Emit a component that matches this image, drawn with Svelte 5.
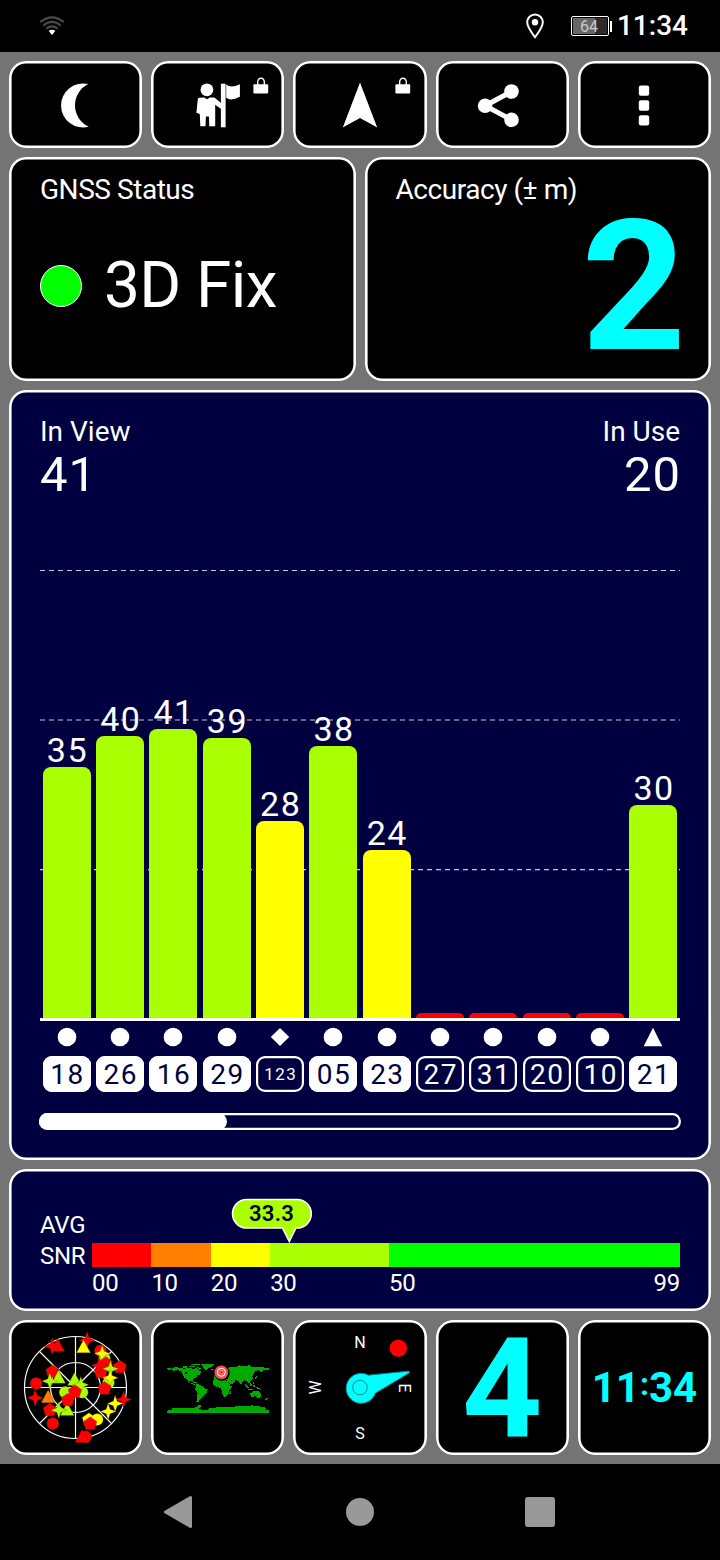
<script lang="ts">
  type Shape = 'circle' | 'diamond' | 'triangle';
  type Marker = 'circle' | 'tri' | 'pent' | 'star';

  const LIME = '#aaff00';
  const YELLOW = '#ffff00';
  const RED = '#ff0000';
  const ORANGE = '#ff8000';
  const GREEN = '#00ff00';

  const satellites: { id: string; snr?: number; height: number; color: string; shape: Shape; used: boolean }[] = [
    { id: '18', snr: 35, height: 251, color: LIME, shape: 'circle', used: true },
    { id: '26', snr: 40, height: 282, color: LIME, shape: 'circle', used: true },
    { id: '16', snr: 41, height: 289, color: LIME, shape: 'circle', used: true },
    { id: '29', snr: 39, height: 280, color: LIME, shape: 'circle', used: true },
    { id: '123', snr: 28, height: 197, color: YELLOW, shape: 'diamond', used: false },
    { id: '05', snr: 38, height: 272, color: LIME, shape: 'circle', used: true },
    { id: '23', snr: 24, height: 168, color: YELLOW, shape: 'circle', used: true },
    { id: '27', height: 5, color: RED, shape: 'circle', used: false },
    { id: '31', height: 5, color: RED, shape: 'circle', used: false },
    { id: '20', height: 5, color: RED, shape: 'circle', used: false },
    { id: '10', height: 5, color: RED, shape: 'circle', used: false },
    { id: '21', snr: 30, height: 213, color: LIME, shape: 'triangle', used: true },
  ];

  const ranges = [
    { from: '00', span: 10, color: RED },
    { from: '10', span: 10, color: ORANGE },
    { from: '20', span: 10, color: YELLOW },
    { from: '30', span: 20, color: LIME },
    { from: '50', span: 49, color: GREEN },
  ];

  const sky: [Marker, string, number, number][] = [
    ['tri', RED, 143, 77], ['star', RED, 127, 79], ['star', RED, 232, 61], ['tri', YELLOW, 221, 82],
    ['circle', RED, 272, 93], ['circle', LIME, 284, 117], ['star', YELLOW, 277, 101],
    ['pent', RED, 288, 130], ['pent', RED, 273, 156], ['star', RED, 268, 137], ['pent', RED, 330, 141],
    ['star', LIME, 302, 147], ['circle', LIME, 296, 189], ['star', YELLOW, 301, 174], ['pent', RED, 284, 205],
    ['pent', RED, 128, 155], ['tri', LIME, 146, 173], ['star', LIME, 120, 184],
    ['circle', RED, 79, 191], ['star', RED, 76, 234], ['tri', ORANGE, 115, 232],
    ['pent', RED, 120, 270], ['tri', LIME, 172, 270], ['star', LIME, 147, 271], ['circle', RED, 129, 311],
    ['tri', LIME, 194, 180], ['circle', LIME, 166, 217], ['circle', LIME, 217, 217], ['star', LIME, 213, 195],
    ['pent', RED, 174, 240], ['pent', RED, 195, 215],
    ['star', RED, 341, 239], ['star', YELLOW, 316, 251], ['star', YELLOW, 295, 275],
    ['pent', YELLOW, 237, 299], ['circle', YELLOW, 262, 299], ['pent', RED, 241, 311],
    ['circle', RED, 227, 351], ['tri', RED, 217, 351],
  ];

  const markerPaths: Record<Marker, string> = {
    circle: 'M-18 0a18 18 0 1 0 36 0a18 18 0 1 0-36 0z',
    tri: 'M0-22L21 17H-21z',
    pent: 'M0-20L20-6L13 18H-13L-20-6z',
    star: 'M0-25L6-7L24 0L6 7L0 25L-6 7L-24 0L-6-7z',
  };
</script>

{#snippet lock()}
  <rect x="35.4" y="-20.8" width="14.8" height="9.4" rx="1" />
  <path d="M39.7-20v-3.2a3.3 3.6 0 0 1 6.6 0v3.2" fill="none" stroke="#fff" stroke-width="1.4" />
{/snippet}

<div class="screen">
  <header class="status-bar">
    <svg class="wifi" width="26" height="20" viewBox="0 0 26 20">
      <g fill="none" stroke="#4a4a4a" stroke-width="2.2">
        <path d="M1.2 6.2Q13-3.5 24.8 6.2" />
        <path d="M4.3 9.5Q13 2.4 21.7 9.5" />
        <path d="M7.3 12.6Q13 8.2 18.7 12.6" />
      </g>
      <path d="M9.6 14.7Q13 12.6 16.4 14.7L13 19z" fill="#fff" />
    </svg>
    <svg class="pin" width="20" height="26" viewBox="0 0 20 26">
      <path d="M10 24.2C6.5 19.5 2.2 14 2.2 9.2a7.8 7.8 0 0 1 15.6 0C17.8 14 13.5 19.5 10 24.2z" fill="none" stroke="#fff" stroke-width="2" />
      <circle cx="10" cy="9.2" r="3.2" fill="#fff" />
    </svg>
    <div class="battery"><span>64</span></div>
    <i class="nub"></i>
    <span class="time">11:34</span>
  </header>

  <main>
    <div class="row toolbar">
      <button class="panel" aria-label="Night mode">
        <svg width="120" height="80" viewBox="-60 -40 120 80">
          <path d="M12.3-20.9A22 22 0 1 0 12.8 21.7A23.5 23.5 0 0 1 12.3-20.9z" />
        </svg>
      </button>
      <button class="panel" aria-label="Guide">
        <svg width="120" height="80" viewBox="-60 -40 120 80">
          <circle cx="-11.1" cy="-15.2" r="6.4" />
          <path d="M-18.5-7.2L-13.8-7.5L-11.1-5.7L-8.1-7.5H-3.7L3.5-1.8V4.2L-2.8-.2V21.2H-8.7L-9.1 11.5H-12.1L-12.5 21.2H-17.7L-18.2 9L-21.6 7.7L-20.2-5.8Q-20-7.2-18.5-7.2z" />
          <rect x="2.9" y="-21.3" width="4.7" height="43.6" />
          <path d="M8.2-20.5Q13-16.5 21.9-20.8V-8.2Q13-3.5 8.2-7.2z" />
          {@render lock()}
        </svg>
      </button>
      <button class="panel" aria-label="Navigate">
        <svg width="120" height="80" viewBox="-60 -40 120 80">
          <path d="M0-22.5L17.2 22.5L0 13L-17.2 22.5z" />
          {@render lock()}
        </svg>
      </button>
      <button class="panel" aria-label="Share">
        <svg width="120" height="80" viewBox="-60 -40 120 80">
          <path d="M9.5-13.5L-16.9.8L9.5 14.8" fill="none" stroke="#fff" stroke-width="5" />
          <circle cx="9.5" cy="-13.5" r="7.3" />
          <circle cx="-16.9" cy=".8" r="7.3" />
          <circle cx="9.5" cy="14.8" r="7.3" />
        </svg>
      </button>
      <button class="panel" aria-label="Menu">
        <svg width="120" height="80" viewBox="-60 -40 120 80">
          <rect x="-5.2" y="-19.6" width="10.4" height="10.4" rx="2" />
          <rect x="-5.2" y="-4.7" width="10.4" height="10.4" rx="2" />
          <rect x="-5.2" y="10.2" width="10.4" height="10.4" rx="2" />
        </svg>
      </button>
    </div>

    <div class="row status">
      <section class="panel">
        <h2>GNSS Status</h2>
        <div class="fix"><i class="lamp"></i><span>3D Fix</span></div>
      </section>
      <section class="panel">
        <h2>Accuracy (± m)</h2>
        <div class="accuracy">2</div>
      </section>
    </div>

    <section class="panel navy chart-panel">
      <div class="counts">
        <div><span class="label">In View</span><span class="count">41</span></div>
        <div class="right"><span class="label">In Use</span><span class="count">20</span></div>
      </div>
      <div class="chart">
        <svg class="grid" width="640" height="450">
          {#each [0.5, 150, 299.7] as y}
            <line x1="0" x2="640" y1={y} y2={y} />
          {/each}
        </svg>
        {#each satellites as sat}
          <div class="col">
            {#if sat.snr}<span class="snr">{sat.snr}</span>{/if}
            <div class="bar" style="height: {sat.height}px; background: {sat.color}"></div>
          </div>
        {/each}
      </div>
      <div class="sats">
        {#each satellites as sat}
          <div class="sat">
            <svg width="20" height="20" viewBox="-10 -10 20 20" fill="#fff">
              {#if sat.shape === 'circle'}
                <circle r="9.3" />
              {:else if sat.shape === 'diamond'}
                <path d="M0-9L9.2 0L0 9L-9.2 0z" />
              {:else}
                <path d="M0-9.2L9.3 9.2H-9.3z" />
              {/if}
            </svg>
            <span class="chip" class:used={sat.used} class:small={sat.id.length > 2}>{sat.id}</span>
          </div>
        {/each}
      </div>
      <div class="scroll"><i></i></div>
    </section>

    <section class="panel navy snr-panel">
      <div class="avg-label"><span>AVG</span><span>SNR</span></div>
      <div class="scale">
        <div class="bubble">
          <svg width="82" height="46" viewBox="0 0 82 46">
            <path d="M15.8 1.5H66A14.2 14.2 0 0 1 66 30H65L58.3 43.5L51.5 30H15.8A14.2 14.2 0 0 1 15.8 1.5z" fill="#aaff00" stroke="#fff" stroke-width="1.6" />
          </svg>
          <span>33.3</span>
        </div>
        <div class="ranges">
          {#each ranges as r}
            <div style="flex-grow: {r.span}; background: {r.color}"></div>
          {/each}
        </div>
        <div class="ticks">
          {#each ranges as r, i}
            <div style="flex-grow: {r.span}">
              <span>{r.from}</span>
              {#if i === ranges.length - 1}<span>99</span>{/if}
            </div>
          {/each}
        </div>
      </div>
    </section>

    <div class="row tiles">
      <div class="panel">
        <svg width="124" height="124" viewBox="12.5 18.5 372 372">
          <g fill="none" stroke="#fff" stroke-width="3.5">
            <circle cx="197" cy="203" r="153" />
            <circle cx="197" cy="203" r="75" />
            <path d="M44 203H350M197 50V356M89 95L305 311M305 95L89 311" />
          </g>
          {#each sky as [kind, color, x, y]}
            <path d={markerPaths[kind]} transform="translate({x} {y})" fill={color} stroke="#5a3000" stroke-opacity=".5" stroke-width="1.5" />
          {/each}
        </svg>
      </div>
      <div class="panel">
        <svg width="102" height="50" viewBox="51 130 306 150" shape-rendering="crispEdges">
          <g fill="#00aa00">
            <path d="M66 145L78 142L102 147L120 144L132 149L138 145L153 156L150 164L141 168L138 174L129 179L132 186L120 183L114 187L123 190L132 192L138 198L129 195L117 188L109 178L102 173L96 159L87 152L78 151L69 155z" />
            <path d="M51 144H62V150H54zM98 140H112V144H98zM118 138H136V143H118zM123 132H150V136H123zM140 140L152 146L148 151L142 146zM150 133H192L186 142L176 145L169 153L162 147L156 138zM184 147H193V151H184z" />
            <path d="M138 195L144 192L158 200L162 205L173 209L171 218L163 227L156 235L149 239L145 249L139 246L142 230L143 220L136 210z" />
            <path d="M190 180L203 178L210 182L227 182L235 184L240 198L247 199L242 208L237 214L234 225L227 232L220 230L216 217L213 205L199 202L190 195z" />
            <path d="M191 169L199 163L196 158L204 160L202 153L208 145L221 144L232 146L244 141L258 143L267 137L281 139L300 137L306 143L324 142L357 145V150L340 151L334 159L328 152L316 153L312 160L307 169L309 178L302 182L297 192L289 185L283 182L278 186L273 196L265 184L256 181L252 190L242 194L234 183L220 180L212 174L204 178L192 178z" />
            <path d="M239 216L243 213L242 222L238 224zM284 192L290 197L296 204L292 205L286 199zM299 190L306 192L305 200L299 198zM309 188H313V194H309zM294 207H310V210H294zM309 196L315 198L314 203L309 203zM316 201L330 205L332 210L321 207zM316 174L321 168L322 173L315 181zM300 222L308 217L313 213L321 216L324 211L334 223L333 232L327 237L316 230L303 232zM351 232L354 236L347 242L345 240zM130 187H142V191H130z" />
            <path d="M51 273L66 271L63 267L84 264L120 266L138 263L144 258L152 255V261L147 266L154 271L174 270L180 265L213 262L246 263L261 259L284 260L306 257L324 260L345 262L347 267L342 272H357V279H51z" />
          </g>
          <path d="M104 158H111V162H104zM214 174H235V179H214zM240 179L248 182L244 184z" fill="#000" />
          <circle cx="216" cy="160" r="23" fill="#000" shape-rendering="auto" />
          <g fill="none" shape-rendering="auto">
            <circle cx="214" cy="158" r="20.5" fill="#ef5350" />
            <circle cx="214" cy="158" r="12" stroke="#fff" stroke-width="3" />
            <circle cx="214" cy="158" r="5" fill="#f00" stroke="#fbb" stroke-width="2" />
          </g>
        </svg>
      </div>
      <div class="panel">
        <svg class="compass" width="120" height="120" viewBox="30 23.5 360 360">
          <path d="M235 165L355 153Q361 154 358 158L256 219A45 45 0 1 1 235 165z" fill="#0ff" stroke="#008b8b" stroke-width="3" />
          <circle cx="210" cy="202" r="22" fill="none" stroke="#008b8b" stroke-width="3" />
          <circle cx="325" cy="84" r="26" fill="#f00" />
          <text x="210" y="83.5">N</text>
          <text transform="translate(328 204) rotate(90)">E</text>
          <text x="210" y="356">S</text>
          <text transform="translate(92 202) rotate(-90)">W</text>
        </svg>
      </div>
      <div class="panel heading">4</div>
      <div class="panel clock">11<span>:</span>34</div>
    </div>
  </main>

  <nav>
    <svg width="32" height="34" viewBox="0 0 32 34"><path d="M3.5 17L28.5 2.5V31.5z" stroke-width="3" stroke-linejoin="round" /></svg>
    <i class="home"></i>
    <i class="recent"></i>
  </nav>
</div>

<style>
  :global(body) {
    background: #000;
  }
  .screen {
    width: 720px;
    height: 1560px;
    overflow: hidden;
    background: #000;
    color: #fff;
    font-family: Roboto, sans-serif;
  }
  .status-bar {
    display: flex;
    align-items: center;
    height: 52px;
    padding: 0 32px 0 39px;
    box-sizing: border-box;
  }
  .pin {
    margin-left: auto;
    margin-right: 26px;
  }
  .battery {
    width: 38px;
    height: 20px;
    box-sizing: border-box;
    border: 1px solid #fff;
    border-radius: 2px;
    padding: 1px;
  }
  .battery span {
    display: block;
    height: 16px;
    background: linear-gradient(90deg, #666 64%, #2c2c2c 64%);
    color: #ccc;
    font-size: 16px;
    line-height: 17px;
    text-align: center;
    text-indent: -2px;
  }
  .nub {
    width: 2px;
    height: 11px;
    margin: 0 5px 0 1px;
    background: #fff;
  }
  .time {
    font-size: 28px;
    font-weight: 500;
    line-height: 50px;
  }
  main {
    display: flex;
    flex-direction: column;
    gap: 9px;
    height: 1412px;
    padding: 9px;
    box-sizing: border-box;
    background: #747474;
  }
  .row {
    display: grid;
    grid-template-columns: repeat(5, 1fr);
    grid-template-rows: 100%;
    gap: 9px;
  }
  .panel {
    min-width: 0;
    margin: 0;
    padding: 0;
    border: none;
    border-radius: 17px;
    box-sizing: border-box;
    background: #000;
    box-shadow: inset 0 0 0 2.6px #fff;
  }
  .navy {
    background: #000040;
  }
  .toolbar {
    height: 87px;
  }
  .toolbar .panel,
  .tiles .panel {
    display: flex;
    align-items: center;
    justify-content: center;
  }
  .toolbar svg {
    fill: #fff;
    flex: none;
  }
  .row.status {
    grid-template-columns: 1fr 1fr;
    height: 224px;
  }
  .status .panel {
    padding: 16px 31px 0;
  }
  h2 {
    margin: 0;
    font-size: 28px;
    line-height: 33px;
    font-weight: 400;
    letter-spacing: -0.45px;
    white-space: nowrap;
  }
  .fix {
    display: flex;
    align-items: center;
    gap: 22px;
    margin-top: 41px;
    font-size: 64px;
    line-height: 77px;
    letter-spacing: -0.6px;
  }
  .lamp {
    width: 42px;
    height: 42px;
    box-sizing: border-box;
    border: 1.5px solid #fff;
    border-radius: 50%;
    background: #0f0;
  }
  .accuracy {
    margin: -10px -6px 0 0;
    color: #0ff;
    font-size: 182px;
    font-weight: 700;
    line-height: 182px;
    text-align: right;
  }
  .chart-panel {
    height: 770px;
    padding: 26px 31px 0;
  }
  .counts {
    display: flex;
    justify-content: space-between;
    height: 154px;
  }
  .counts div {
    display: flex;
    flex-direction: column;
  }
  .counts .right {
    align-items: flex-end;
  }
  .right .count {
    margin-right: -1px;
  }
  .label {
    font-size: 28px;
    line-height: 32px;
  }
  .count {
    font-size: 49px;
    line-height: 53px;
    letter-spacing: 1px;
  }
  .chart {
    position: relative;
    display: flex;
    align-items: flex-end;
    height: 448px;
    border-bottom: 3px solid #fff;
  }
  .grid {
    position: absolute;
    top: 0;
    left: 0;
  }
  .grid line {
    stroke: #c8c8d8;
    stroke-width: 1.2;
    stroke-dasharray: 5 4;
  }
  .col {
    position: relative;
    display: flex;
    flex: 1;
    flex-direction: column;
    align-items: center;
  }
  .snr {
    font-size: 34px;
    line-height: 34px;
    letter-spacing: 1.5px;
    margin-right: -1.5px;
  }
  .bar {
    width: 48px;
    border-radius: 8px 8px 0 0;
  }
  .sats {
    display: flex;
    margin-top: 6px;
  }
  .sat {
    display: flex;
    flex: 1;
    flex-direction: column;
    align-items: center;
    gap: 9px;
  }
  .chip {
    width: 48px;
    height: 36px;
    border-radius: 9px;
    box-shadow: inset 0 0 0 2.2px #fff;
    font-size: 28px;
    line-height: 38px;
    letter-spacing: 1.5px;
    text-indent: 1.5px;
    text-align: center;
  }
  .chip.used {
    background: #fff;
    color: #000040;
  }
  .chip.small {
    font-size: 17px;
    line-height: 37px;
  }
  .scroll {
    height: 17px;
    margin: 21px -1px 0;
    border-radius: 9px;
    box-shadow: inset 0 0 0 2.3px #fff;
  }
  .scroll i {
    display: block;
    width: 188px;
    height: 17px;
    border-radius: 9px;
    background: #fff;
  }
  .snr-panel {
    display: flex;
    height: 142px;
    padding: 0 31px;
    font-size: 24px;
    letter-spacing: -0.3px;
  }
  .avg-label {
    display: flex;
    flex-direction: column;
    width: 52px;
    padding-top: 41px;
    line-height: 31px;
  }
  .scale {
    position: relative;
    flex: 1;
    padding-top: 74px;
  }
  .bubble {
    position: absolute;
    top: 29px;
    left: 139px;
    width: 82px;
    height: 46px;
  }
  .bubble span {
    position: absolute;
    top: 0;
    left: 0;
    width: 81px;
    color: #000040;
    font-size: 22px;
    font-weight: 600;
    line-height: 32px;
    letter-spacing: 0.3px;
    text-align: center;
  }
  .ranges,
  .ticks {
    display: flex;
  }
  .ranges div {
    flex-basis: 0;
    height: 24px;
  }
  .ticks div {
    display: flex;
    flex-basis: 0;
    justify-content: space-between;
    line-height: 32px;
  }
  .tiles {
    height: 135px;
  }
  .compass text {
    fill: #fff;
    font-size: 48px;
    text-anchor: middle;
  }
  .heading {
    padding-top: 4px;
    color: #0ff;
    font-size: 140px;
    font-weight: 700;
    line-height: 135px;
  }
  .clock {
    color: #0ff;
    font-size: 42px;
    font-weight: 700;
  }
  .clock span {
    position: relative;
    top: -4px;
    font-size: 32px;
  }
  nav {
    display: flex;
    align-items: center;
    justify-content: space-between;
    height: 96px;
    padding: 0 165px 0 162px;
  }
  nav svg {
    fill: #999;
    stroke: #999;
  }
  .home {
    width: 28px;
    height: 28px;
    border-radius: 50%;
    background: #999;
  }
  .recent {
    width: 30px;
    height: 30px;
    border-radius: 3px;
    background: #999;
  }
</style>
